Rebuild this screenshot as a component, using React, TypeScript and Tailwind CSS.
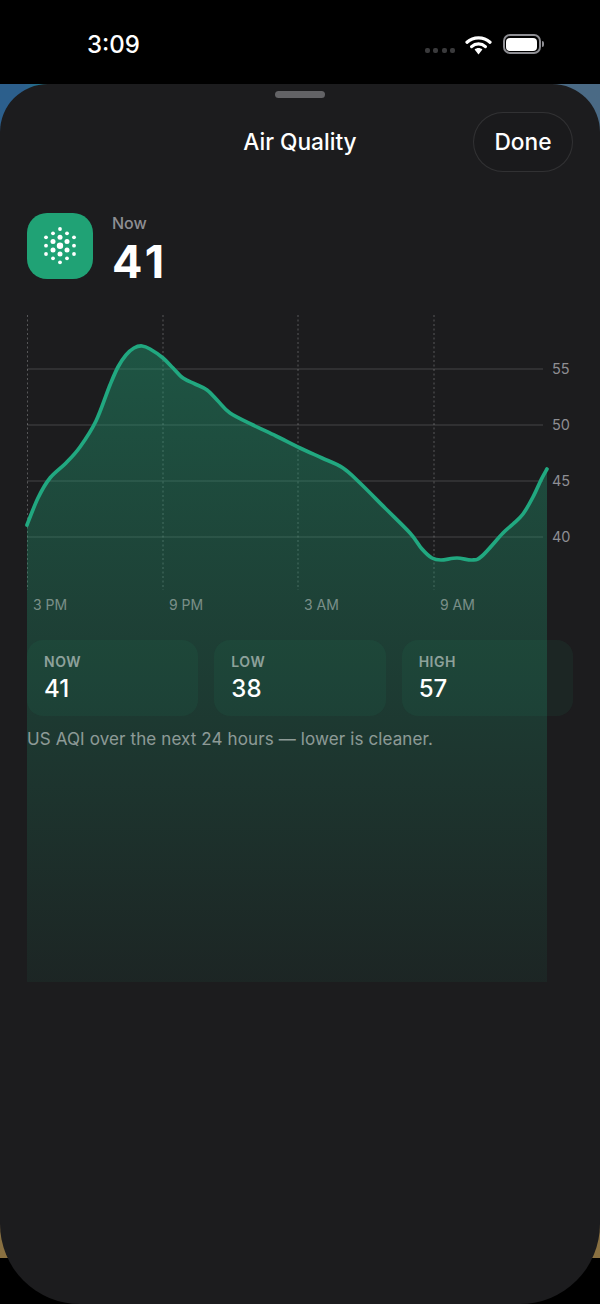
const curve: [number, number][] = [
  [27, 525], [38, 498], [50, 478], [66, 463], [80, 447], [96, 421], [110, 385], [118, 367],
  [126, 355], [134, 348], [142, 346], [150, 349], [163, 358], [173, 368], [183, 378], [195, 384], [207, 390],
  [218, 401], [230, 413], [253, 425], [276, 436], [300, 448], [322, 458], [343, 468], [360, 483], [385, 508],
  [410, 533], [422, 549], [432, 558], [441, 560], [457, 558], [472, 560], [482, 556], [503, 533],
  [513, 524], [523, 514], [533, 497], [541, 480], [547, 469],
];

function smoothPath(pts: [number, number][]) {
  let d = `M${pts[0][0]} ${pts[0][1]}`;
  for (let i = 0; i < pts.length - 1; i++) {
    const p0 = pts[i - 1] || pts[i];
    const p1 = pts[i];
    const p2 = pts[i + 1];
    const p3 = pts[i + 2] || p2;
    const c1x = p1[0] + (p2[0] - p0[0]) / 6;
    const c1y = p1[1] + (p2[1] - p0[1]) / 6;
    const c2x = p2[0] - (p3[0] - p1[0]) / 6;
    const c2y = p2[1] - (p3[1] - p1[1]) / 6;
    d += ` C${c1x.toFixed(1)} ${c1y.toFixed(1)} ${c2x.toFixed(1)} ${c2y.toFixed(1)} ${p2[0]} ${p2[1]}`;
  }
  return d;
}

const linePath = smoothPath(curve);
const areaPath = `${linePath} L547 982 L27 982 Z`;

const dots: [number, number, number][] = [
  [60, 229, 1.9], [60, 237.3, 2.5], [60, 245.7, 3.2], [60, 254, 2.5], [60, 262.3, 1.9],
  [53, 233.3, 1.9], [53, 241.6, 2.5], [53, 250, 2.5], [53, 258.3, 1.9],
  [67, 233.3, 1.9], [67, 241.6, 2.5], [67, 250, 2.5], [67, 258.3, 1.9],
  [46, 237.3, 1.9], [46, 245.7, 1.9], [46, 254, 1.9],
  [74, 237.3, 1.9], [74, 245.7, 1.9], [74, 254, 1.9],
];

function StatCard({ label, value }: { label: string; value: string }) {
  return (
    <div className="relative flex h-[76px] flex-1 flex-col rounded-[16px] bg-[#21a377]/[0.08] px-[17px] pt-[13px]">
      <span className="text-[14px] leading-[18px] font-semibold tracking-[0.5px] text-white/50">{label}</span>
      <span className="mt-[3px] text-[24px] leading-[30px] font-medium text-white">{value}</span>
    </div>
  );
}

export default function App() {
  return (
    <div className="relative h-[1304px] w-[600px] overflow-hidden bg-black font-['Inter',sans-serif]">
      <div className="absolute top-[84px] left-0 h-[1174px] w-full bg-gradient-to-b from-[#2c5f8c] via-[#5a6a6a] to-[#8a7040]" />
      <div className="absolute top-[84px] left-0 h-[50px] w-full bg-gradient-to-r from-[#2c5f8c] from-[4%] via-[#127a8c] via-[8%] to-[#4a6a85] to-[92%]" />

      <div className="relative flex h-[84px] items-start">
        <span className="mt-[30px] ml-[87px] text-[24px] leading-[30px] font-medium text-white">3:09</span>
        <div className="ml-auto flex items-start pt-[34px] pr-[56px]">
          <div className="mt-[14px] flex gap-[3.3px]">
            <span className="h-[5px] w-[5px] rounded-[2px] bg-[#3a3a3c]" />
            <span className="h-[5px] w-[5px] rounded-[2px] bg-[#3a3a3c]" />
            <span className="h-[5px] w-[5px] rounded-[2px] bg-[#3a3a3c]" />
            <span className="h-[5px] w-[5px] rounded-[2px] bg-[#3a3a3c]" />
          </div>
          <svg className="mt-[1px] ml-[9.5px]" width="27" height="20" viewBox="0 0 27 20" fill="none">
            <path d="M2 7.2C8.4 1.4 18.6 1.4 25 7.2" stroke="white" strokeWidth="3.2" strokeLinecap="round" />
            <path d="M6.6 11.6C10.6 8 16.4 8 20.4 11.6" stroke="white" strokeWidth="3.2" strokeLinecap="round" />
            <path d="M9.6 14.6C11.8 12.6 15.2 12.6 17.4 14.6L13.5 19.4Z" fill="white" />
          </svg>
          <div className="ml-[11px] flex items-center">
            <div className="h-[20px] w-[38px] rounded-[7px] border-2 border-[#8e8e93] p-[1.5px]">
              <div className="h-full w-full rounded-[4px] bg-white" />
            </div>
            <div className="ml-[1.5px] h-[6px] w-[2px] rounded-r-full bg-[#8e8e93]" />
          </div>
        </div>
      </div>

      <div className="relative h-[1220px] w-full overflow-hidden rounded-t-[48px] rounded-b-[80px] bg-[#1c1c1e] px-[27px]">
        <div className="mx-auto mt-[7px] h-[7px] w-[50px] rounded-full bg-[#636366]" />

        <div className="relative mt-[14px] flex h-[60px] items-center justify-center">
          <span className="text-[22.7px] font-medium text-white">Air Quality</span>
          <button className="absolute top-0 right-0 flex h-[60px] w-[100px] items-center justify-center rounded-[30px] border border-white/10 bg-[#1a1a1c] text-[22.7px] font-medium text-white">
            Done
          </button>
        </div>

        <div className="mt-[41px] flex h-[66px]">
          <svg width="66" height="66" viewBox="27 213 66 66" className="shrink-0">
            <rect x="27" y="213" width="66" height="66" rx="20" fill="#20a275" />
            {dots.map(([cx, cy, r], i) => (
              <circle key={i} cx={cx} cy={cy} r={r} fill="white" />
            ))}
          </svg>
          <div className="ml-[19px] flex flex-col">
            <span className="text-[16px] leading-[20px] font-medium text-[#8e8e93]">Now</span>
            <span className="mt-[3px] text-[45px] leading-[52px] font-bold tracking-[4px] text-white">41</span>
          </div>
        </div>

        <svg
          className="mt-[36px] mb-[28px] block overflow-visible"
          width="546"
          height="297"
          viewBox="27 315 546 297"
          fill="none"
        >
          <defs>
            <linearGradient id="aqiFill" gradientUnits="userSpaceOnUse" x1="0" y1="346" x2="0" y2="982">
              <stop offset="0" stopColor="#21a377" stopOpacity="0.42" />
              <stop offset="1" stopColor="#21a377" stopOpacity="0.07" />
            </linearGradient>
          </defs>
          {[369, 425, 481, 537].map((y) => (
            <line key={y} x1="27" x2="543" y1={y} y2={y} stroke="white" strokeOpacity="0.18" strokeWidth="1.2" />
          ))}
          {[27.5, 163, 298, 434].map((x) => (
            <line key={x} x1={x} x2={x} y1="315" y2="590" stroke="white" strokeOpacity="0.26" strokeDasharray="2 2.5" />
          ))}
          <path d={areaPath} fill="url(#aqiFill)" />
          <path d={linePath} stroke="#21a880" strokeWidth="3.7" strokeLinecap="round" strokeLinejoin="round" />
          {[
            ["55", 369],
            ["50", 425],
            ["45", 481],
            ["40", 537],
          ].map(([t, y]) => (
            <text key={t} x="552" y={Number(y) + 5} fontSize="14.5" fill="#8e8e93">
              {t}
            </text>
          ))}
          {[
            ["3 PM", 33],
            ["9 PM", 169],
            ["3 AM", 304],
            ["9 AM", 440],
          ].map(([t, x]) => (
            <text key={t} x={x} y="610" fontSize="14" fill="white" fillOpacity="0.42">
              {t}
            </text>
          ))}
        </svg>

        <div className="flex gap-[16px]">
          <StatCard label="NOW" value="41" />
          <StatCard label="LOW" value="38" />
          <StatCard label="HIGH" value="57" />
        </div>

        <p className="relative mt-[12px] text-[17px] leading-[22px] tracking-[0.12px] text-white/50">
          US AQI over the next 24 hours — lower is cleaner.
        </p>
      </div>
    </div>
  );
}
